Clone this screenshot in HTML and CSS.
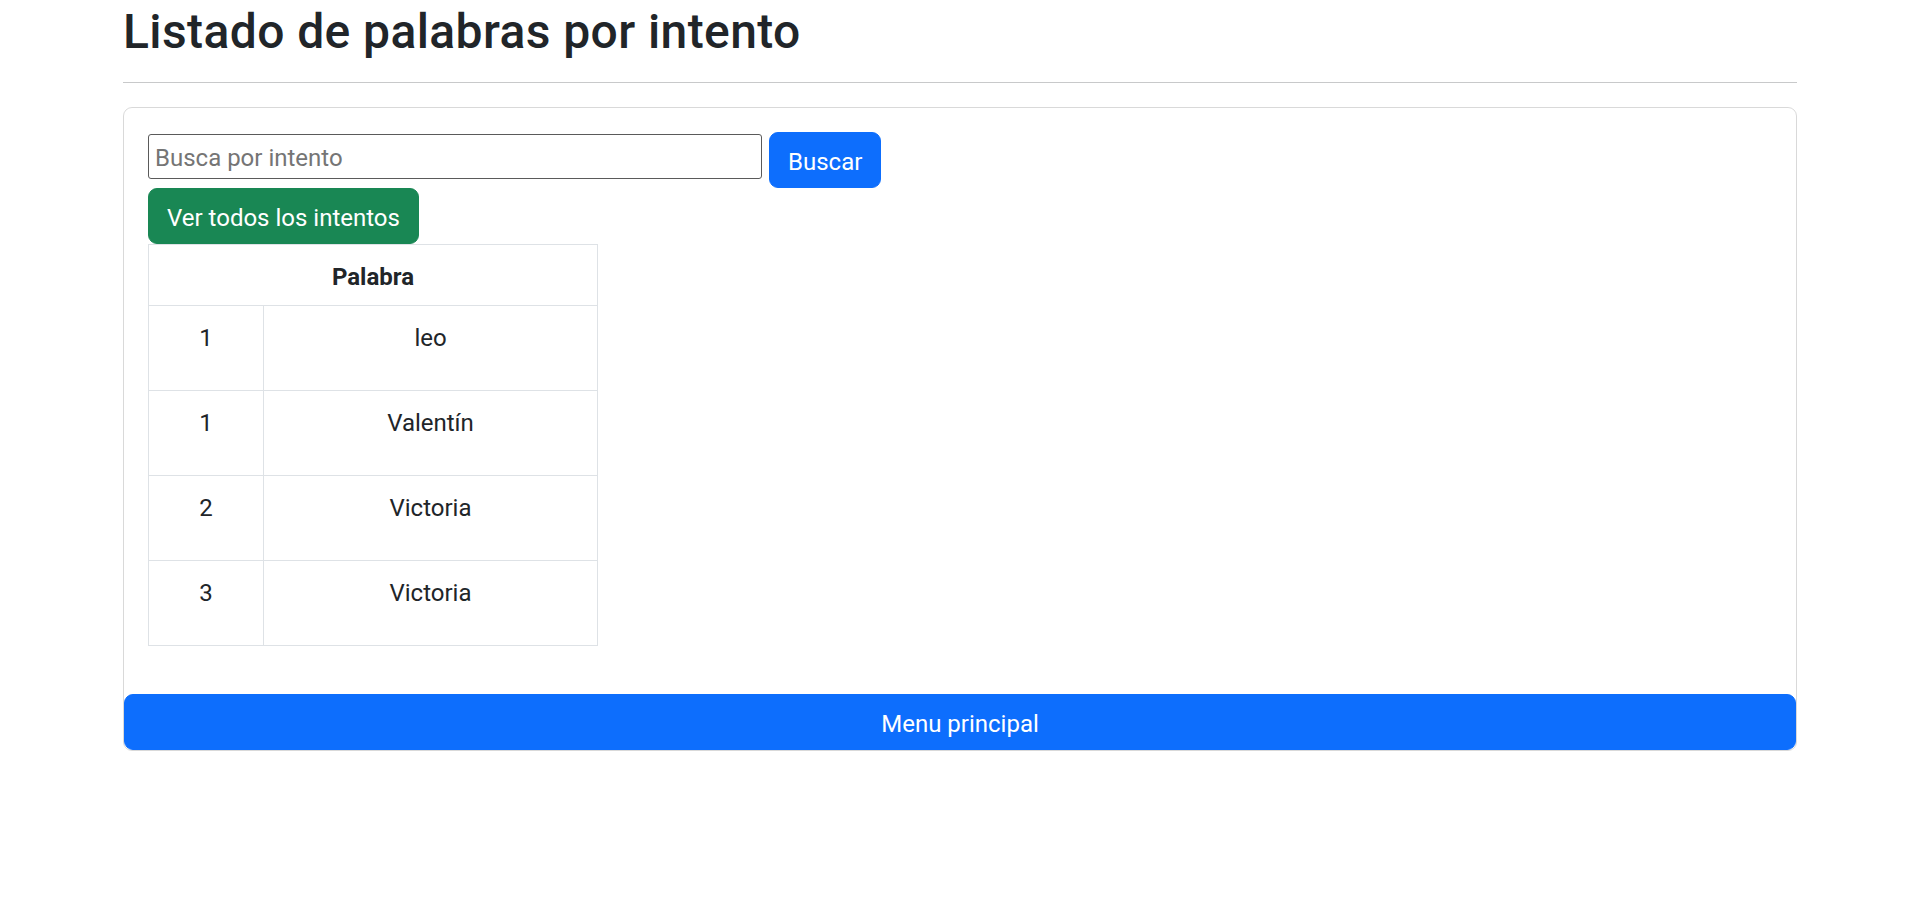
FILE: index.html
```html
<!DOCTYPE html>
<html lang="es">
<head>
<meta charset="utf-8">
<title>Listado de palabras por intento</title>
<link rel="stylesheet" href="styles.css">
</head>
<body>
<div class="container">
  <h2 class="title">Listado de palabras por intento</h2>
  <hr class="divider">
  <div class="card">
    <div class="card-body">
      <form class="search-form">
        <input class="search-input" type="text" placeholder="Busca por intento">
        <button class="btn btn-primary" type="button">Buscar</button>
      </form>
      <div class="all-row">
        <button class="btn btn-success" type="button">Ver todos los intentos</button>
      </div>
      <table class="words">
        <colgroup>
          <col class="col-num">
          <col class="col-word">
        </colgroup>
        <thead>
          <tr><th colspan="2">Palabra</th></tr>
        </thead>
        <tbody>
          <tr><td class="num">1</td><td>leo</td></tr>
          <tr><td class="num">1</td><td>Valentín</td></tr>
          <tr><td class="num">2</td><td>Victoria</td></tr>
          <tr><td class="num">3</td><td>Victoria</td></tr>
        </tbody>
      </table>
    </div>
    <a class="btn btn-primary btn-block" href="#">Menu principal</a>
  </div>
</div>
</body>
</html>
```
FILE: styles.css
```css
* {
  box-sizing: border-box;
}

body {
  margin: 0;
  font-family: Roboto, "Noto Sans", "Liberation Sans", sans-serif;
  font-size: 24px;
  line-height: 1.5;
  color: #212529;
  background: #fff;
}

.container {
  width: 1674px;
  margin: 0 auto;
}

.title {
  margin: 0;
  padding-top: 7px;
  font-size: 48px;
  font-weight: 500;
  line-height: 50.6px;
  letter-spacing: 0.4px;
}

.divider {
  margin: 24px 0;
  border: 0;
  border-top: 1px solid #c8c9ca;
  height: 0;
}

.card {
  border: 1px solid rgba(0, 0, 0, 0.15);
  border-radius: 9px;
}

.card-body {
  padding: 24px;
}

.search-form {
  display: flex;
  align-items: flex-start;
  gap: 7px;
  margin: 0;
}

.search-input {
  width: 614px;
  height: 45px;
  margin-top: 2px;
  padding: 3px 6px 0;
  border: 1px solid #5a5a5a;
  border-radius: 3px;
  font-family: inherit;
  font-size: 24px;
  color: #212529;
  background: #fff;
}

.search-input::placeholder {
  color: #757575;
}

.btn {
  display: inline-block;
  padding: 11px 18px 7px;
  border: 1px solid transparent;
  border-radius: 9px;
  font-family: inherit;
  font-size: 24px;
  font-weight: 400;
  line-height: 36px;
  color: #fff;
  text-align: center;
  text-decoration: none;
  cursor: pointer;
}

.btn-primary {
  background: #0d6efd;
  border-color: #0d6efd;
}

.btn-success {
  background: #198754;
  border-color: #198754;
}

.all-row {
  display: flex;
}

.btn-block {
  display: block;
  width: 100%;
}

.words {
  width: 450px;
  margin-bottom: 24px;
  table-layout: fixed;
  border-collapse: separate;
  border-spacing: 0;
  border-top: 1px solid #dee2e6;
  border-left: 1px solid #dee2e6;
  border-right: 1px solid #dee2e6;
}

.col-num {
  width: 115px;
}

.col-word {
  width: 333px;
}

.words th {
  padding: 14px 12px 10px;
  border-bottom: 1px solid #dee2e6;
  font-weight: 700;
  text-align: center;
}

.words td {
  padding: 14px 12px 34px;
  border-bottom: 1px solid #dee2e6;
  text-align: center;
  vertical-align: top;
}

.words td.num {
  border-right: 1px solid #dee2e6;
}
```
